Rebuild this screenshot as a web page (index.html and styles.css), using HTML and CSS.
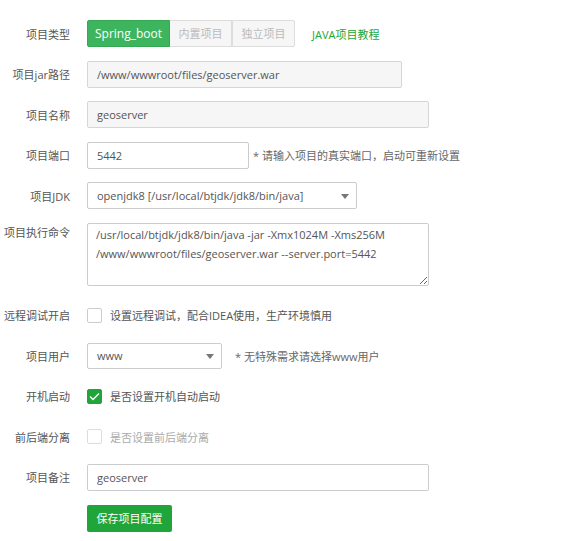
FILE: index.html
```html
<!DOCTYPE html>
<html lang="zh-CN">
<head>
<meta charset="utf-8">
<title>项目设置</title>
<link rel="stylesheet" href="styles.css">
</head>
<body>
<form class="form">
  <div class="row">
    <label class="label">项目类型</label>
    <div class="ctrl">
      <div class="btn-group">
        <span class="seg seg-active">Spring_boot</span>
        <span class="seg seg-w1">内置项目</span>
        <span class="seg seg-w2">独立项目</span>
      </div>
      <a class="link">JAVA项目教程</a>
    </div>
  </div>
  <div class="row">
    <label class="label">项目jar路径</label>
    <div class="ctrl"><div class="input input-ro w-jar">/www/wwwroot/files/geoserver.war</div></div>
  </div>
  <div class="row">
    <label class="label">项目名称</label>
    <div class="ctrl"><div class="input input-ro w-full">geoserver</div></div>
  </div>
  <div class="row">
    <label class="label">项目端口</label>
    <div class="ctrl"><div class="input w-port">5442</div><span class="hint">* 请输入项目的真实端口，启动可重新设置</span></div>
  </div>
  <div class="row">
    <label class="label">项目JDK</label>
    <div class="ctrl"><div class="input select w-jdk">openjdk8 [/usr/local/btjdk/jdk8/bin/java]<span class="caret"></span></div></div>
  </div>
  <div class="row row-area">
    <label class="label">项目执行命令</label>
    <div class="ctrl"><textarea class="textarea w-full">/usr/local/btjdk/jdk8/bin/java -jar -Xmx1024M -Xms256M /www/wwwroot/files/geoserver.war --server.port=5442</textarea></div>
  </div>
  <div class="row row-cb">
    <label class="label">远程调试开启</label>
    <div class="ctrl"><span class="cb"></span><span class="cb-text">设置远程调试，配合IDEA使用，生产环境慎用</span></div>
  </div>
  <div class="row">
    <label class="label">项目用户</label>
    <div class="ctrl"><div class="input select w-user">www<span class="caret"></span></div><span class="hint hint-user">* 无特殊需求请选择www用户</span></div>
  </div>
  <div class="row row-cb">
    <label class="label">开机启动</label>
    <div class="ctrl"><span class="cb cb-on"><svg width="11" height="9" viewBox="0 0 11 9"><path d="M1 4.5 L4 7.5 L10 1.5" fill="none" stroke="#fff" stroke-width="1.4"/></svg></span><span class="cb-text">是否设置开机自动启动</span></div>
  </div>
  <div class="row row-cb">
    <label class="label">前后端分离</label>
    <div class="ctrl"><span class="cb cb-dis"></span><span class="cb-text cb-text-dis">是否设置前后端分离</span></div>
  </div>
  <div class="row">
    <label class="label">项目备注</label>
    <div class="ctrl"><div class="input w-full">geoserver</div></div>
  </div>
  <div class="row">
    <span class="label"></span>
    <div class="ctrl"><span class="btn-save">保存项目配置</span></div>
  </div>
</form>
</body>
</html>
```

FILE: styles.css
```css
html, body {
  margin: 0;
  padding: 0;
  background: #fff;
}
body {
  font-family: "Open Sans", "Noto Sans CJK SC", sans-serif;
  font-size: 11px;
  color: #555;
}
.form {
  padding-top: 20px;
}
.row {
  display: flex;
  align-items: center;
  height: 27px;
  margin-bottom: 13.5px;
}
.row-area {
  height: 63px;
  align-items: flex-start;
  margin-bottom: 16px;
}
.row-area .label {
  line-height: 19px;
}
.label {
  width: 70px;
  padding-right: 17px;
  text-align: right;
  flex: none;
  color: #555;
  white-space: nowrap;
}
.ctrl {
  display: flex;
  align-items: center;
}
.btn-group {
  display: flex;
  height: 27px;
}
.seg {
  box-sizing: border-box;
  height: 27px;
  line-height: 25px;
  border: 1px solid #ddd;
  background: #f6f6f6;
  color: #bbb;
  text-align: center;
  font-size: 11px;
}
.seg-active {
  width: 83px;
  background: #3db55e;
  border-color: #36a854;
  color: #fff;
  font-size: 12px;
  border-radius: 2px 0 0 2px;
}
.seg-w1 {
  width: 62px;
  border-left: none;
}
.seg-w2 {
  width: 63px;
  border-left: 1px solid #ddd;
  border-radius: 0 2px 2px 0;
}
.link {
  margin-left: 17px;
  color: #20a53a;
  font-size: 11px;
}
.input {
  box-sizing: border-box;
  position: relative;
  height: 27px;
  line-height: 25px;
  border: 1px solid #ccc;
  border-radius: 2px;
  padding: 0 9px;
  background: #fff;
  color: #555;
  font-size: 11px;
}
.input-ro {
  background: #f6f6f6;
  border-color: #d6d6d6;
}
.w-jar { width: 315px; }
.w-full { width: 342px; }
.w-port { width: 162px; }
.w-jdk { width: 270px; }
.w-user { width: 135px; height: 26px; line-height: 24px; }
.select .caret {
  position: absolute;
  right: 7px;
  top: 50%;
  margin-top: -2px;
  width: 0;
  height: 0;
  border-left: 4.5px solid transparent;
  border-right: 4.5px solid transparent;
  border-top: 5px solid #777;
}
.hint {
  margin-left: 4px;
  color: #666;
  font-size: 11px;
}
.hint-user {
  margin-left: 13px;
}
.textarea {
  box-sizing: border-box;
  height: 63px;
  border: 1px solid #ccc;
  border-radius: 2px;
  padding: 1px 8px;
  font-family: inherit;
  font-size: 11px;
  line-height: 19px;
  color: #555;
  margin: 0;
  resize: both;
  outline: none;
}
.cb {
  box-sizing: border-box;
  width: 15px;
  height: 15px;
  border: 1px solid #ccc;
  border-radius: 2px;
  background: #fff;
  display: flex;
  align-items: center;
  justify-content: center;
}
.cb-on {
  background: #20a53a;
  border-color: #20a53a;
}
.cb-dis {
  border-color: #ddd;
}
.cb-text {
  margin-left: 8px;
  color: #555;
}
.cb-text-dis {
  color: #aaa;
}
.btn-save {
  box-sizing: border-box;
  display: inline-block;
  width: 85px;
  height: 27px;
  line-height: 27px;
  background: #20a53a;
  color: #fff;
  text-align: center;
  border-radius: 2px;
  font-size: 11px;
  margin-top: 1px;
}
```
